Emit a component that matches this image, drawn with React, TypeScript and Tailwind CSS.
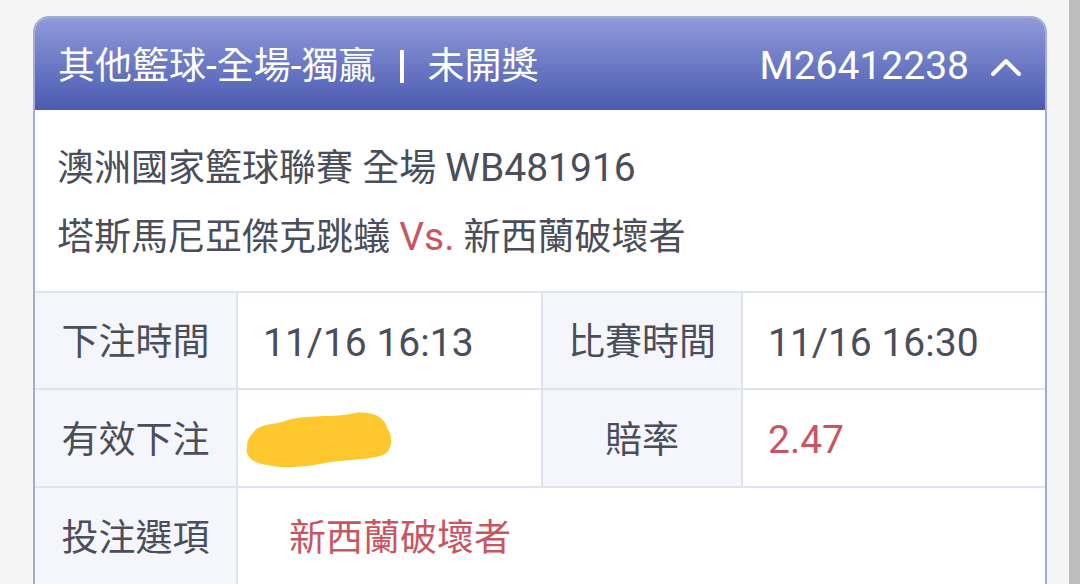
import React from "react";

const labelCell =
  "flex items-center justify-center bg-[#f5f6fb] pt-[5px] text-[#4a4e5a]";
const valueCell = "flex items-center bg-white pl-[25px] pt-[5px]";

const L = ({ children }: { children: React.ReactNode }) => (
  <span className="text-[39px]">{children}</span>
);

const Blob = () => (
  <svg width="148" height="58" viewBox="0 0 148 58" className="ml-[7px] mt-[4px]">
    <path
      d="M8 22 C14 12 30 14 40 10 C60 3 90 7 110 2 C126 0 140 6 142 17 C148 24 148 40 138 44 C120 50 100 48 80 52 C60 56 40 58 22 54 C8 52 0 46 2 36 C2 30 4 26 8 22 Z"
      fill="#fec72d"
    />
  </svg>
);

export default function App() {
  return (
    <div className="flex h-[584px] overflow-hidden bg-[#f5f5f5] font-[family-name:Roboto,'Noto_Sans_CJK_TC',sans-serif] text-[37px] text-[#4a4e5a]">
      <div className="w-[1069px] pl-[33px] pr-[22px] pt-[16px]">
        <div className="rounded-t-[16px] border-2 border-[#a4acd6] overflow-hidden">
          {/* header */}
          <div className="flex h-[92px] items-center justify-between bg-gradient-to-b from-[#8f9ad9] to-[#4b5ab0] px-[23px] pt-[5px] text-white">
            <div className="flex items-center">
              <span>
                其他籃球<L>-</L>全場<L>-</L>獨贏
              </span>
              <span className="mx-[24px] h-[33px] w-[4px] bg-white" />
              <span>未開獎</span>
            </div>
            <div className="flex items-center">
              <L>M26412238</L>
              <svg width="32" height="20" viewBox="0 0 32 20" className="ml-[21px]">
                <polyline
                  points="3,17 16,4 29,17"
                  fill="none"
                  stroke="white"
                  strokeWidth="4"
                  strokeLinecap="round"
                  strokeLinejoin="round"
                />
              </svg>
            </div>
          </div>

          {/* match info */}
          <div className="bg-white pl-[22px] pt-[24px] pb-[19px] leading-[69px]">
            <div>
              澳洲國家籃球聯賽 全場 <L>WB481916</L>
            </div>
            <div>
              塔斯馬尼亞傑克跳蟻{" "}
              <span className="text-[39px] text-[#c95563]">Vs.</span> 新西蘭破壞者
            </div>
          </div>

          {/* details table */}
          <div className="grid grid-cols-[201px_305px_200px_1fr] border-t-2 border-[#dfe2f0] [&>div]:border-[#dfe2f0]">
            <div className={`${labelCell} h-[97px] border-b-2`}>下注時間</div>
            <div className={`${valueCell} h-[97px] border-b-2 border-l-2`}>
              <L>11/16 16:13</L>
            </div>
            <div className={`${labelCell} h-[97px] border-b-2 border-l-2`}>比賽時間</div>
            <div className={`${valueCell} h-[97px] border-b-2 border-l-2`}>
              <L>11/16 16:30</L>
            </div>

            <div className={`${labelCell} h-[98px] border-b-2`}>有效下注</div>
            <div className="flex h-[98px] items-center border-b-2 border-l-2 bg-white">
              <Blob />
            </div>
            <div className={`${labelCell} h-[98px] border-b-2 border-l-2`}>賠率</div>
            <div className={`${valueCell} h-[98px] border-b-2 border-l-2 text-[#c95563]`}>
              <L>2.47</L>
            </div>

            <div className={`${labelCell} h-[97px]`}>投注選項</div>
            <div className="col-span-3 flex h-[97px] items-center border-l-2 bg-white pl-[51px] pt-[5px] text-[#c95563]">
              新西蘭破壞者
            </div>
          </div>
        </div>
      </div>
      <div className="h-[584px] w-[11px] bg-[#bdbdbd]" />
    </div>
  );
}
